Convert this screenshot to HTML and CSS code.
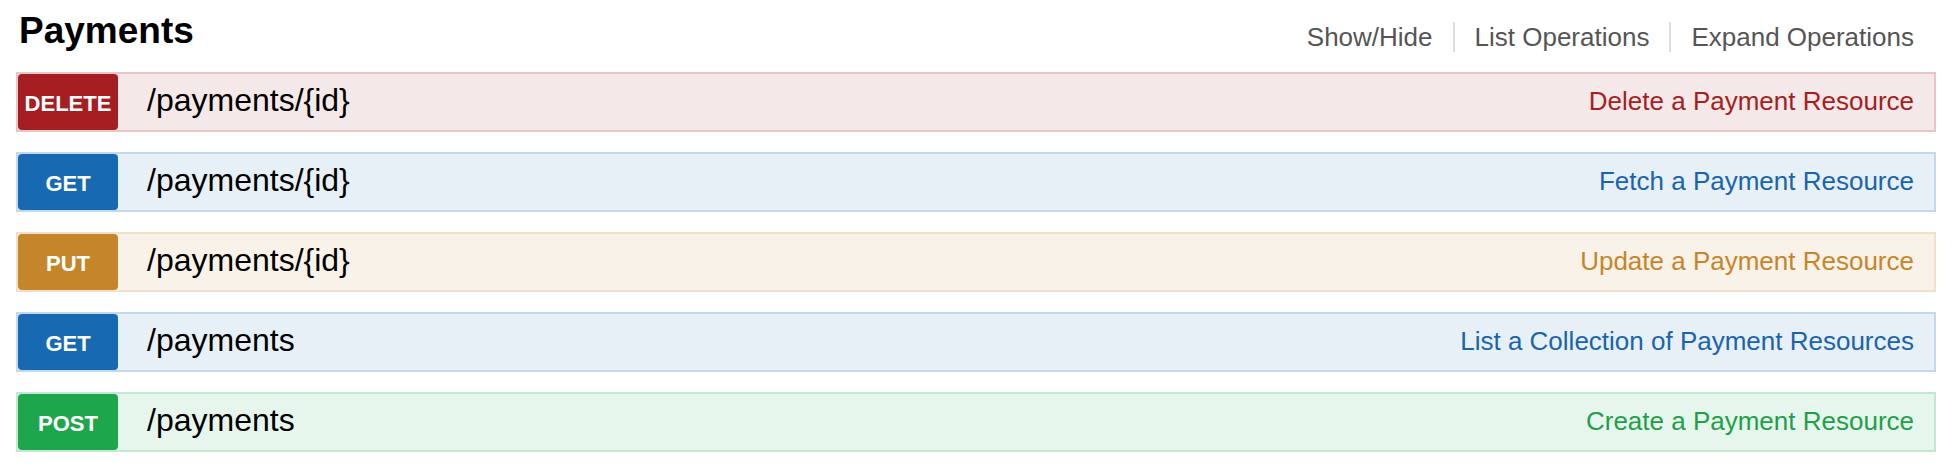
FILE: index.html
```html
<!DOCTYPE html>
<html lang="en">
<head>
<meta charset="utf-8">
<title>Payments</title>
<link rel="stylesheet" href="styles.css">
</head>
<body>
<div class="resource">
  <div class="resource-head">
    <h2 class="resource-title">Payments</h2>
    <ul class="options">
      <li class="option">Show/Hide</li>
      <li class="option">List Operations</li>
      <li class="option">Expand Operations</li>
    </ul>
  </div>
  <ul class="operations">
    <li class="op op-delete">
      <span class="verb">DELETE</span>
      <span class="path">/payments/{id}</span>
      <span class="summary">Delete a Payment Resource</span>
    </li>
    <li class="op op-get">
      <span class="verb">GET</span>
      <span class="path">/payments/{id}</span>
      <span class="summary">Fetch a Payment Resource</span>
    </li>
    <li class="op op-put">
      <span class="verb">PUT</span>
      <span class="path">/payments/{id}</span>
      <span class="summary">Update a Payment Resource</span>
    </li>
    <li class="op op-get">
      <span class="verb">GET</span>
      <span class="path">/payments</span>
      <span class="summary">List a Collection of Payment Resources</span>
    </li>
    <li class="op op-post">
      <span class="verb">POST</span>
      <span class="path">/payments</span>
      <span class="summary">Create a Payment Resource</span>
    </li>
  </ul>
</div>
</body>
</html>
```

FILE: styles.css
```css
* {
  box-sizing: border-box;
}

html, body {
  margin: 0;
  padding: 0;
  background: #ffffff;
}

body {
  font-family: "Liberation Sans", Arial, Helvetica, sans-serif;
  color: #000;
}

.resource {
  padding: 0 18px 0 16px;
}

.resource-head {
  display: flex;
  justify-content: space-between;
  align-items: flex-start;
  height: 72px;
}

.resource-title {
  margin: 9px 0 0 3px;
  font-size: 37px;
  line-height: 44px;
  font-weight: bold;
  color: #000;
}

.options {
  display: flex;
  list-style: none;
  margin: 22px 22px 0 0;
  padding: 0;
}

.option {
  font-size: 26px;
  line-height: 30px;
  color: #555555;
  padding: 0 20px;
  border-right: 2px solid #dddddd;
}

.option:last-child {
  border-right: none;
  padding-right: 0;
}

.operations {
  list-style: none;
  margin: 0;
  padding: 0;
  display: flex;
  flex-direction: column;
  gap: 20px;
}

.op {
  display: flex;
  align-items: flex-start;
  height: 60px;
  border: 2px solid;
}

.verb {
  flex: 0 0 100px;
  height: 56px;
  padding-top: 4px;
  line-height: 52px;
  text-align: center;
  font-size: 22px;
  font-weight: bold;
  color: #ffffff;
  border-radius: 4px;
}

.path {
  margin-left: 29px;
  font-size: 32px;
  line-height: 53px;
  color: #000;
}

.summary {
  margin-left: auto;
  padding-right: 20px;
  font-size: 26px;
  line-height: 54px;
}

.op-delete {
  background: #f5e8e8;
  border-color: #e8c6c7;
}
.op-delete .verb {
  background: #a41e22;
}
.op-delete .summary {
  color: #a41e22;
}

.op-get {
  background: #e7f0f7;
  border-color: #c3d9ec;
}
.op-get .verb {
  background: #176ab2;
}
.op-get .summary {
  color: #1a64ac;
}

.op-put {
  background: #f9f2e9;
  border-color: #f0e0ca;
}
.op-put .verb {
  background: #c5862b;
}
.op-put .summary {
  color: #c5862b;
}

.op-post {
  background: #e7f6ec;
  border-color: #c3e8d1;
}
.op-post .verb {
  background: #1ea64c;
}
.op-post .summary {
  color: #1ea04a;
}
```
